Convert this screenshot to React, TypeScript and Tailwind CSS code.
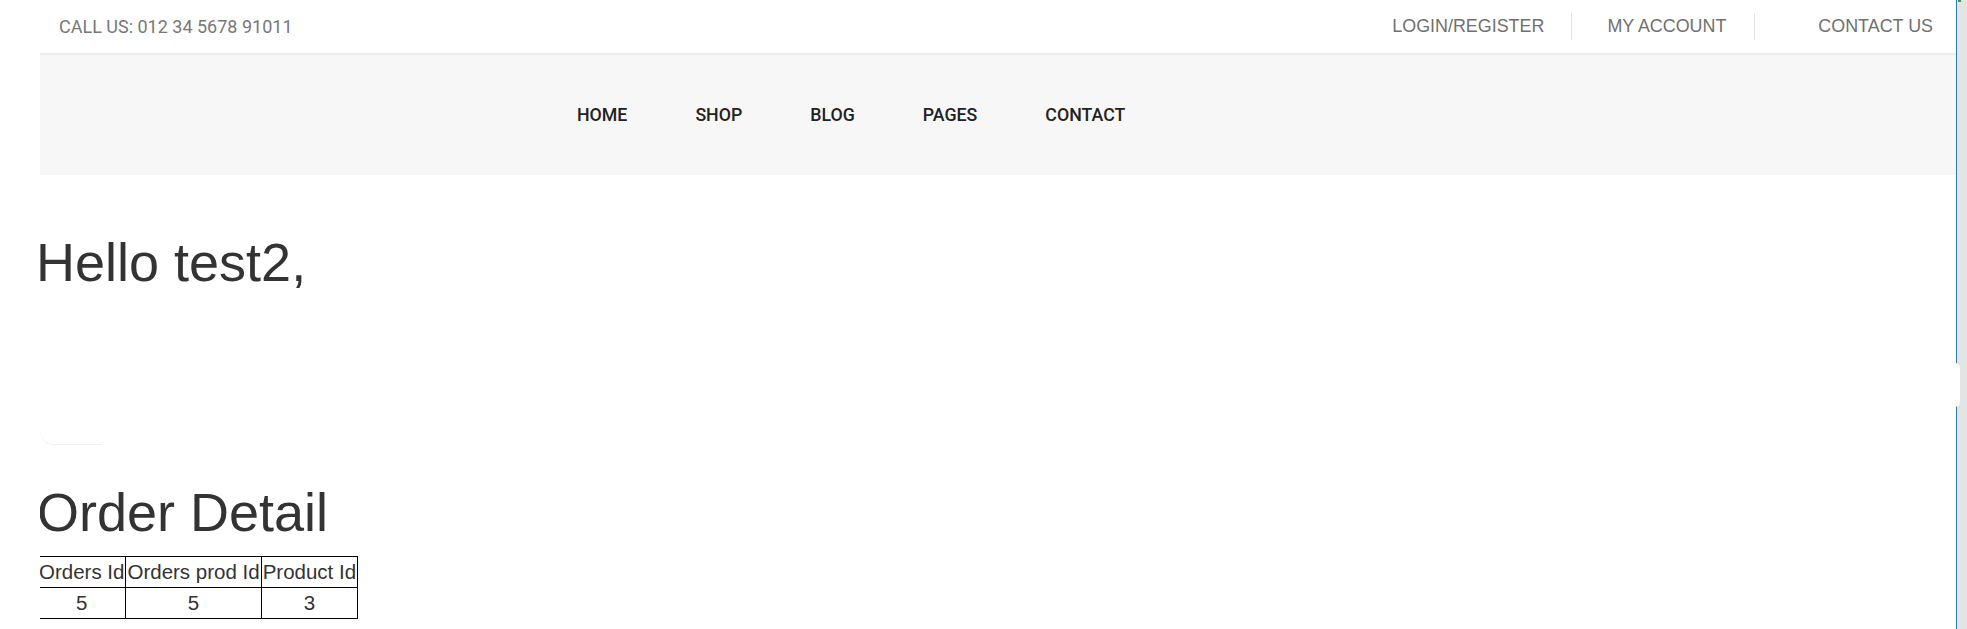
import React from 'react';

const navItems = ['HOME', 'SHOP', 'BLOG', 'PAGES', 'CONTACT'];

const orders = [{ id: 5, prodId: 5, productId: 3 }];

export default function App() {
  return (
    <div className="relative flex h-[629px] w-full overflow-hidden bg-white">
      <div className="flex min-w-0 flex-1 flex-col">
        {/* Top bar */}
        <div className="flex h-[53px] items-center justify-between pl-[59px] pr-[23px]">
          <span className="text-[18px] text-[#787878] font-['Roboto',sans-serif]">CALL US: 012 34 5678 91011</span>
          <div className="flex items-center text-[17.9px] text-[#707070] font-['Liberation_Sans',Arial,sans-serif]">
            <a>LOGIN/REGISTER</a>
            <span className="ml-[27px] h-[27px] w-px bg-[#e3e3e3]" />
            <a className="ml-[35px]">MY ACCOUNT</a>
            <span className="ml-[28px] h-[27px] w-px bg-[#e3e3e3]" />
            <a className="ml-[63px]">CONTACT US</a>
          </div>
        </div>

        <div className="pl-[40px]">
          <div className="overflow-hidden">
            {/* Main nav */}
            <nav className="flex h-[122px] items-center gap-[68px] border-t-2 border-[#ececec] bg-[#f7f7f7] pl-[537px] text-[17.75px] font-medium text-[#222] font-['Roboto',sans-serif]">
              {navItems.map((item) => (
                <a key={item}>{item}</a>
              ))}
            </nav>

            {/* Content */}
            <div className="text-[#333] font-['Liberation_Sans',Arial,sans-serif]">
              <h1 className="-ml-[4px] mt-[56px] text-[54px] leading-[1.15]">Hello test2,</h1>
              <div className="h-[118px]" />
              <div className="h-[34px] w-[62px] rounded-bl-[14px] border-b border-[#f0f0f0]" />
              <div className="h-[36px]" />
              <h1 className="-ml-[3px] text-[54px] leading-[1.15]">Order Detail</h1>
              <table className="-ml-[3px] mt-[13px] border-collapse text-[20.5px] text-[#333]">
                <thead>
                  <tr>
                    <th className="border border-black px-[1px] font-normal leading-[30px]">Orders Id</th>
                    <th className="border border-black px-[1px] font-normal leading-[30px]">Orders prod Id</th>
                    <th className="border border-black px-[1px] font-normal leading-[30px]">Product Id</th>
                  </tr>
                </thead>
                <tbody>
                  {orders.map((o) => (
                    <tr key={o.id}>
                      <td className="border border-black px-[1px] text-center leading-[30px]">{o.id}</td>
                      <td className="border border-black px-[1px] text-center leading-[30px]">{o.prodId}</td>
                      <td className="border border-black px-[1px] text-center leading-[30px]">{o.productId}</td>
                    </tr>
                  ))}
                </tbody>
              </table>
            </div>
          </div>
        </div>
      </div>

      {/* window edge + scrollbar */}
      <div className="w-px bg-[#2a7db3]" />
      <div className="w-[10px] bg-[#e4e4e4]" />
      <div className="absolute right-[7px] top-[363px] h-[44px] w-[5px] rounded-r-full bg-white" />
      <div className="absolute right-[6px] top-0 h-[2px] w-[3px] bg-[#3c9a4a]" />
    </div>
  );
}
